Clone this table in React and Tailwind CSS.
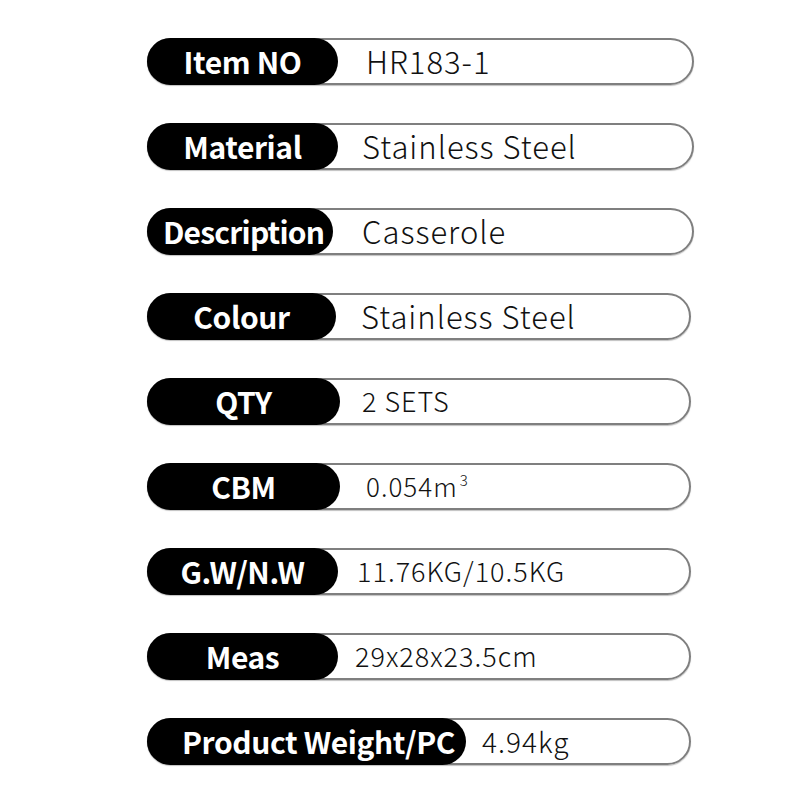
import React from 'react';

const rows = [
  { label: 'Item NO', value: 'HR183-1', lw: 'w-[191px] justify-center', vx: 'pl-[28px]', vs: 'text-[31px]', w: 'w-[547px]' },
  { label: 'Material', value: 'Stainless Steel', lw: 'w-[191px] justify-center', vx: 'pl-[24px]', vs: 'text-[31px]', w: 'w-[547px]' },
  { label: 'Description', value: 'Casserole', lw: 'w-[186px] justify-start pl-[16px] tracking-[-0.8px]', vx: 'pl-[29px]', vs: 'text-[31px]', w: 'w-[547px]' },
  { label: 'Colour', value: 'Stainless Steel', lw: 'w-[189px] justify-center', vx: 'pl-[25px]', vs: 'text-[31px]', w: 'w-[544px]' },
  { label: 'QTY', value: '2 SETS', lw: 'w-[193px] justify-center', vx: 'pl-[22px]', vs: 'text-[27px]', w: 'w-[544px]' },
  { label: 'CBM', value: '0.054m', sup: '3', lw: 'w-[193px] justify-center', vx: 'pl-[26px]', vs: 'text-[26px]', w: 'w-[544px]' },
  { label: 'G.W/N.W', value: '11.76KG/10.5KG', lw: 'w-[191px] justify-center', vx: 'pl-[19px]', vs: 'text-[27px]', w: 'w-[544px]' },
  { label: 'Meas', value: '29x28x23.5cm', lw: 'w-[191px] justify-center', vx: 'pl-[17px]', vs: 'text-[27px]', w: 'w-[544px]' },
  { label: 'Product Weight/PC', value: '4.94kg', lw: 'w-[319px] justify-start pl-[35px]', vx: 'pl-[16px]', vs: 'text-[28px]', w: 'w-[544px]' },
];

export default function App() {
  return (
    <div
      className="w-[800px] h-[800px] bg-white pl-[147px] pt-[38px] flex flex-col gap-[38px]"
      style={{ fontFamily: '"Noto Sans CJK SC", "Noto Sans", sans-serif' }}
    >
      {rows.map((r) => (
        <div
          key={r.label}
          className={`${r.w} h-[47px] rounded-full border-2 border-[#7f7f7f] flex items-center shadow-[0_1px_1px_rgba(0,0,0,0.25)]`}
        >
          <div
            className={`h-[47px] -ml-[2px] shrink-0 rounded-full bg-black text-white font-bold text-[30px] tracking-[-0.4px] flex items-center leading-none whitespace-nowrap ${r.lw}`}
          >
            <span className="-translate-y-[1px]">{r.label}</span>
          </div>
          <div className={`${r.vx} ${r.vs} font-light text-[#111] tracking-[1px] leading-none -translate-y-[1px] whitespace-nowrap`}>
            {r.value}
            {r.sup && <span className="text-[15px] relative -top-[11px] ml-[2px]">{r.sup}</span>}
          </div>
        </div>
      ))}
    </div>
  );
}
